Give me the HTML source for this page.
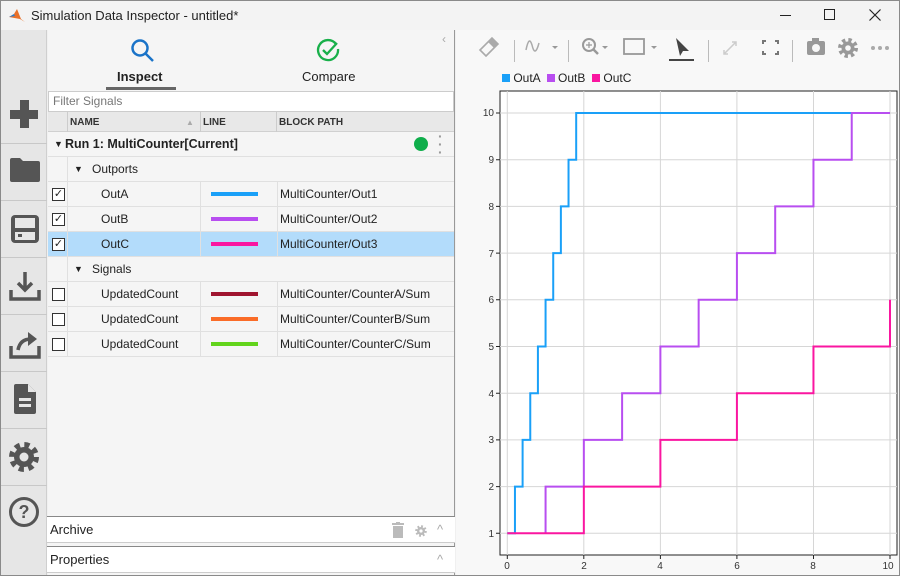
<!DOCTYPE html>
<html><head><style>
*{box-sizing:border-box;margin:0;padding:0}
body{width:900px;height:576px;overflow:hidden;background:#f0f0f0;font-family:"Liberation Sans",Arial,sans-serif;font-size:12px;color:#222;position:relative}
.abs{position:absolute}
.win{position:absolute;left:0;top:0;width:900px;height:576px;border:1px solid #8a8a8a}
.sb{left:1px;top:30px;width:46px;height:545px;background:#e6e6e6;border-right:1px solid #cfcfcf}
.sep{position:absolute;left:0;width:46px;height:1px;background:#c8c8c8}
.row{position:absolute;left:48px;width:406px;height:25px;border-bottom:1px solid #e0e0e0;background:#f5f5f5;font-size:12px;line-height:25px}
.cb{position:absolute;left:4px;top:6px;width:13px;height:13px;border:1px solid #333;background:#fff;font-size:11px;line-height:11px;text-align:center}
.vl{position:absolute;top:0;width:1px;height:25px;background:#e0e0e0}
.ln{position:absolute;left:163px;top:10px;width:47px;height:4px}
</style></head><body>
<div class="win"></div>
<!-- title -->
<div class="abs" style="left:1px;top:1px;width:898px;height:29px;background:#f3f3f3"></div>
<svg class="abs" style="left:8px;top:7px" width="18" height="16" viewBox="0 0 18 16"><path d="M1 10 L6 7 L9 2 L13 12 L17 15 L12 12 Z" fill="#e8702a"/><path d="M1 10 L6 7 L7 9 Z" fill="#2a7fcf"/></svg>
<div class="abs" style="left:31px;top:8px;font-size:13px;color:#222">Simulation Data Inspector - untitled*</div>
<div class="abs" style="left:780px;top:15px;width:11px;height:1px;background:#222"></div>
<div class="abs" style="left:824px;top:9px;width:11px;height:11px;border:1px solid #222"></div>
<svg class="abs" style="left:869px;top:9px" width="12" height="12" stroke="#222" stroke-width="1.2"><path d="M0.5 0.5 L11.5 11.5 M11.5 0.5 L0.5 11.5"/></svg>
<!-- sidebar -->
<div class="abs sb">
<div class="sep" style="top:113px"></div><div class="sep" style="top:170px"></div><div class="sep" style="top:227px"></div><div class="sep" style="top:284px"></div><div class="sep" style="top:341px"></div><div class="sep" style="top:398px"></div><div class="sep" style="top:455px"></div>
<div class="abs" style="left:9px;top:80px;width:28px;height:9px;background:#555"></div>
<div class="abs" style="left:19px;top:70px;width:9px;height:28px;background:#555"></div>
<svg class="abs" style="left:8px;top:127px" width="32" height="26"><path d="M1 3 Q1 1 3 1 H11 L14 4 H29 Q31 4 31 6 V23 Q31 25 29 25 H3 Q1 25 1 23Z" fill="#555"/></svg>
<svg class="abs" style="left:9px;top:184px" width="30" height="30"><rect x="1" y="1" width="28" height="28" rx="4" fill="#555"/><rect x="5" y="4" width="20" height="10" fill="#e6e6e6"/><rect x="5" y="18" width="20" height="8" fill="#e6e6e6"/><rect x="8" y="20" width="4" height="3" fill="#555"/></svg>
<svg class="abs" style="left:8px;top:240px" width="32" height="32" fill="none" stroke="#555" stroke-width="3.5"><path d="M16 2 V20 M9 13 L16 20 L23 13"/><path d="M2 20 V29 H30 V20"/></svg>
<svg class="abs" style="left:8px;top:298px" width="32" height="32" fill="none" stroke="#555" stroke-width="3.5"><path d="M2 18 V29 H30 V18"/><path d="M9 22 Q11 11 22 11" /><path d="M19 4 L28 11 L19 18Z" fill="#555" stroke="none"/></svg>
<svg class="abs" style="left:11px;top:353px" width="26" height="32"><path d="M2 3 Q2 1 4 1 H16 L24 9 V29 Q24 31 22 31 H4 Q2 31 2 29Z" fill="#555"/><path d="M16 1 V9 H24" fill="#e6e6e6"/><rect x="7" y="15" width="12" height="3" fill="#e6e6e6"/><rect x="7" y="21" width="12" height="3" fill="#e6e6e6"/></svg>
<svg class="abs" style="left:7px;top:411px" width="32" height="32" viewBox="-16 -16 32 32"><circle r="12" fill="none" stroke="#555" stroke-width="6" stroke-dasharray="5 4.42"/><circle r="10" fill="#555"/><circle r="4.5" fill="#e6e6e6"/></svg>
<div class="abs" style="left:8px;top:467px;width:30px;height:30px;border:3px solid #555;border-radius:50%;text-align:center;font-weight:bold;font-size:18px;line-height:24px;color:#555">?</div>
</div>
<!-- left panel -->
<div class="abs" style="left:48px;top:30px;width:407px;height:545px;background:#f5f5f5;border-right:1px solid #999"></div>
<svg class="abs" style="left:130px;top:38px" width="26" height="26" fill="none" stroke="#1a73c8" stroke-width="2.5"><circle cx="10" cy="10" r="7.5"/><path d="M15.5 15.5 L23 23"/></svg>
<div class="abs" style="left:117px;top:69px;font-size:13px;font-weight:bold;color:#222">Inspect</div>
<div class="abs" style="left:106px;top:87px;width:70px;height:3px;background:#666"></div>
<svg class="abs" style="left:316px;top:38px" width="26" height="26" fill="none" stroke="#18b04a" stroke-width="2.3"><path d="M20 6 A10 10 0 1 0 22 11"/><path d="M7 12 L11 16 L21 5"/></svg>
<div class="abs" style="left:302px;top:69px;font-size:13px;color:#222">Compare</div>
<div class="abs" style="left:442px;top:32px;color:#aaa;font-size:12px">‹</div>
<div class="abs" style="left:48px;top:91px;width:406px;height:21px;background:#fff;border:1px solid #ccc;font-size:12px;color:#777;line-height:19px;padding-left:4px">Filter Signals</div>
<div class="abs" style="left:48px;top:112px;width:406px;height:20px;background:#e8e8e8;border-bottom:1px solid #d0d0d0;font-size:10px;font-weight:bold;line-height:21px;color:#333">
<div class="vl" style="left:19px;height:20px;background:#ccc"></div><div class="vl" style="left:152px;height:20px;background:#ccc"></div><div class="vl" style="left:228px;height:20px;background:#ccc"></div>
<span class="abs" style="left:22px">NAME</span><span class="abs" style="left:155px">LINE</span><span class="abs" style="left:231px">BLOCK PATH</span><span class="abs" style="left:138px;color:#aaa;font-size:8px">▲</span></div>
<div class="row" style="top:132px;font-weight:bold;font-size:12.5px"><span class="abs" style="left:6px;font-size:9px">▼</span><span class="abs" style="left:17px">Run 1: MultiCounter[Current]</span><div class="abs" style="left:366px;top:5px;width:14px;height:14px;border-radius:50%;background:#0fae4b"></div><div class="abs" style="left:390px;top:0;font-size:14px;line-height:8px;color:#999;width:4px">·<br>·<br>·</div></div>
<div class="row" style="top:157px"><div class="vl" style="left:19px"></div><span class="abs" style="left:26px;font-size:9px">▼</span><span class="abs" style="left:44px">Outports</span></div>
<div class="row" style="top:182px"><div class="cb">✓</div><div class="vl" style="left:19px"></div><div class="vl" style="left:152px"></div><div class="vl" style="left:229px"></div><span class="abs" style="left:53px">OutA</span><div class="ln" style="background:#1aa0f8"></div><span class="abs" style="left:232px">MultiCounter/Out1</span></div>
<div class="row" style="top:207px"><div class="cb">✓</div><div class="vl" style="left:19px"></div><div class="vl" style="left:152px"></div><div class="vl" style="left:229px"></div><span class="abs" style="left:53px">OutB</span><div class="ln" style="background:#b84ef0"></div><span class="abs" style="left:232px">MultiCounter/Out2</span></div>
<div class="row" style="top:232px;background:#b3dcfb"><div class="cb">✓</div><div class="vl" style="left:19px"></div><div class="vl" style="left:152px"></div><div class="vl" style="left:229px"></div><span class="abs" style="left:53px">OutC</span><div class="ln" style="background:#fa16a0"></div><span class="abs" style="left:232px">MultiCounter/Out3</span></div>
<div class="row" style="top:257px"><div class="vl" style="left:19px"></div><span class="abs" style="left:26px;font-size:9px">▼</span><span class="abs" style="left:44px">Signals</span></div>
<div class="row" style="top:282px"><div class="cb"></div><div class="vl" style="left:19px"></div><div class="vl" style="left:152px"></div><div class="vl" style="left:229px"></div><span class="abs" style="left:53px">UpdatedCount</span><div class="ln" style="background:#a01530"></div><span class="abs" style="left:232px">MultiCounter/CounterA/Sum</span></div>
<div class="row" style="top:307px"><div class="cb"></div><div class="vl" style="left:19px"></div><div class="vl" style="left:152px"></div><div class="vl" style="left:229px"></div><span class="abs" style="left:53px">UpdatedCount</span><div class="ln" style="background:#fa6c28"></div><span class="abs" style="left:232px">MultiCounter/CounterB/Sum</span></div>
<div class="row" style="top:332px"><div class="cb"></div><div class="vl" style="left:19px"></div><div class="vl" style="left:152px"></div><div class="vl" style="left:229px"></div><span class="abs" style="left:53px">UpdatedCount</span><div class="ln" style="background:#62d41c"></div><span class="abs" style="left:232px">MultiCounter/CounterC/Sum</span></div>
<div class="abs" style="left:47px;top:516px;width:408px;height:27px;background:#fff;border-top:1px solid #888;border-bottom:1px solid #ccc;font-size:13px;line-height:26px;padding-left:3px">Archive
<svg class="abs" style="left:345px;top:5px" width="12" height="16"><rect x="0" y="1" width="12" height="2" fill="#bbb"/><rect x="4" y="0" width="4" height="2" fill="#bbb"/><rect x="1" y="4" width="10" height="12" fill="#bbb"/></svg>
<svg class="abs" style="left:368px;top:8px" width="12" height="12" viewBox="-6 -6 12 12"><circle r="4.6" fill="none" stroke="#bbb" stroke-width="2.4" stroke-dasharray="1.8 1.8"/><circle r="4" fill="#bbb"/><circle r="1.6" fill="#fff"/></svg>
<span class="abs" style="left:390px;color:#aaa">^</span></div>
<div class="abs" style="left:47px;top:546px;width:408px;height:27px;background:#fff;border-top:1px solid #888;border-bottom:1px solid #ccc;font-size:13px;line-height:26px;padding-left:3px">Properties<span class="abs" style="left:390px;color:#aaa">^</span></div>
<!-- right panel -->
<div class="abs" style="left:456px;top:30px;width:443px;height:545px;background:#f8f8f8"></div>
<svg class="abs" style="left:456px;top:30px" width="443" height="40" fill="#999" stroke="none">
<path d="M30 26 L42 14 L36 8 L24 20 Z" fill="none" stroke="#aaa" stroke-width="1.6"/><path d="M36 8 L42 14 L38 18 L32 12Z" fill="#aaa"/>
<rect x="58" y="10" width="1" height="22" fill="#bbb"/>
<path d="M70 20 Q73 5 76 15 Q79 28 83 13" fill="none" stroke="#aaa" stroke-width="1.5"/><path d="M96 16 h6 l-3 3z"/>
<rect x="112" y="10" width="1" height="22" fill="#bbb"/>
<circle cx="133" cy="15" r="6" fill="none" stroke="#999" stroke-width="2"/><path d="M137 19 L142 24" stroke="#999" stroke-width="2.5"/><path d="M130 15 h6 M133 12 v6" stroke="#999" stroke-width="1.2"/><path d="M146 16 h6 l-3 3z"/>
<rect x="168" y="9" width="20" height="15" fill="none" stroke="#999" stroke-width="1.8"/><path d="M195 16 h6 l-3 3z"/>
<path d="M220 8 L233 21 L227 21 L224 26Z" fill="#444"/><rect x="213" y="29" width="25" height="2" fill="#444"/>
<rect x="252" y="10" width="1" height="22" fill="#bbb"/>
<path d="M268 24 L280 12 M276 12 h4 v4 M268 20 v4 h4" stroke="#ccc" stroke-width="1.5" fill="none"/>
<path d="M310 11 h-3 v3 M319 11 h3 v3 M310 24 h-3 v-3 M319 24 h3 v-3" stroke="#777" stroke-width="2" fill="none"/>
<rect x="336" y="10" width="1" height="22" fill="#bbb"/>
<rect x="351" y="11" width="18" height="14" rx="2" fill="#999"/><rect x="356" y="8" width="7" height="4" fill="#999"/><circle cx="360" cy="18" r="4" fill="#f8f8f8"/>
<g transform="translate(392,18)"><circle r="8" fill="none" stroke="#999" stroke-width="4" stroke-dasharray="3.3 3"/><circle r="6.5" fill="#999"/><circle r="2.8" fill="#f8f8f8"/></g>
<circle cx="417" cy="18" r="2" fill="#aaa"/><circle cx="424" cy="18" r="2" fill="#aaa"/><circle cx="431" cy="18" r="2" fill="#aaa"/>
</svg>
<div class="abs" style="left:502px;top:72px;font-size:12px;line-height:12px;color:#222">
<span style="display:inline-block;width:8px;height:8px;background:#1aa0f8"></span> OutA &nbsp;<span style="display:inline-block;width:8px;height:8px;background:#b84ef0"></span> OutB &nbsp;<span style="display:inline-block;width:8px;height:8px;background:#fa16a0"></span> OutC</div>
<svg class="abs" style="left:456px;top:86px" width="443" height="490" viewBox="456 86 443 490">
<rect x="500" y="91" width="397" height="464" fill="#fff" stroke="#222" stroke-width="1"/>
<g stroke="#d6d6d6" stroke-width="1">
<path d="M507.3 91V555M583.8 91V555M660.4 91V555M736.9 91V555M813.5 91V555M890 91V555"/>
<path d="M500 533.3H897M500 486.6H897M500 439.9H897M500 393.2H897M500 346.5H897M500 299.8H897M500 253.1H897M500 206.4H897M500 159.7H897M500 113H897"/>
</g>
<g stroke="#222" stroke-width="1">
<path d="M507.3 555v4M583.8 555v4M660.4 555v4M736.9 555v4M813.5 555v4M890 555v4"/>
<path d="M500 533.3h-4M500 486.6h-4M500 439.9h-4M500 393.2h-4M500 346.5h-4M500 299.8h-4M500 253.1h-4M500 206.4h-4M500 159.7h-4M500 113h-4"/>
</g>
<g font-size="10" fill="#333" text-anchor="end" font-family="Liberation Sans">
<text x="494" y="537">1</text><text x="494" y="490">2</text><text x="494" y="443">3</text><text x="494" y="397">4</text><text x="494" y="350">5</text><text x="494" y="303">6</text><text x="494" y="257">7</text><text x="494" y="210">8</text><text x="494" y="163">9</text><text x="494" y="116">10</text>
</g>
<g font-size="10" fill="#333" text-anchor="middle" font-family="Liberation Sans">
<text x="507" y="569">0</text><text x="584" y="569">2</text><text x="660" y="569">4</text><text x="737" y="569">6</text><text x="813" y="569">8</text><text x="888" y="569">10</text>
</g>
<g transform="translate(507.3,533.3) scale(38.27,-46.7)" fill="none" stroke-width="2">
<path vector-effect="non-scaling-stroke" stroke="#1aa0f8" d="M0,0 H0.2 V1 H0.4 V2 H0.6 V3 H0.8 V4 H1 V5 H1.2 V6 H1.4 V7 H1.6 V8 H1.8 V9 H10"/>
<path vector-effect="non-scaling-stroke" stroke="#b84ef0" d="M1,0 V1 H2 V2 H3 V3 H4 V4 H5 V5 H6 V6 H7 V7 H8 V8 H9 V9 H10"/>
<path vector-effect="non-scaling-stroke" stroke="#fa16a0" d="M0,0 H2 V1 H4 V2 H6 V3 H8 V4 H10 V5"/>
</g>
</svg>
</body></html>
